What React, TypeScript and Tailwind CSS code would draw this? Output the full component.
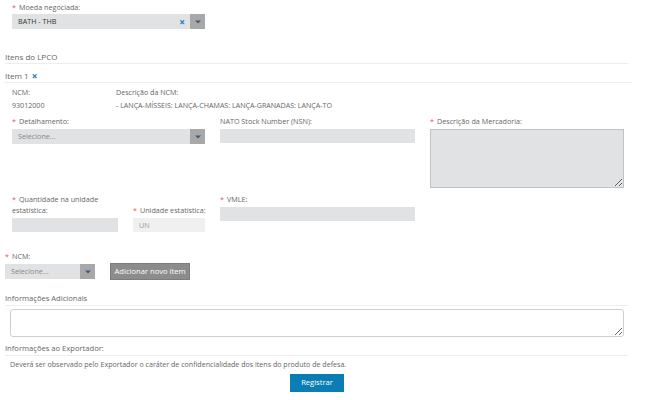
import React from "react";

const font = { fontFamily: '"Open Sans", "DejaVu Sans", sans-serif' };

function Req() {
  return <span className="text-[#e05a5a] mr-[3px]">*</span>;
}

function Label({ children, req }: { children: React.ReactNode; req?: boolean }) {
  return (
    <div className="text-[7.2px] leading-[11px] text-[#666] whitespace-nowrap">
      {req && <Req />}
      {children}
    </div>
  );
}

function Arrow() {
  return (
    <svg width="6" height="4" viewBox="0 0 6 4">
      <path d="M0 0.5 L6 0.5 L3 3.5 Z" fill="#3d5a7a" />
    </svg>
  );
}

function Select({ value, width, clear, placeholder }: { value: string; width: string; clear?: boolean; placeholder?: boolean }) {
  return (
    <div className={`flex h-[15px] ${width} bg-[#e1e2e3]`}>
      <div className={`flex-1 flex items-center pl-[6px] text-[7.2px] ${placeholder ? "text-[#888]" : "text-[#333]"}`}>{value}</div>
      {clear && (
        <div className="flex items-center pr-[5px] text-[#1a7bbd] text-[10px] font-bold leading-none">×</div>
      )}
      <div className="w-[15px] bg-[#a8a8a8] flex items-center justify-center">
        <Arrow />
      </div>
    </div>
  );
}

export default function App() {
  return (
    <div className="w-[650px] h-[400px] bg-white overflow-hidden text-[#555]" style={font}>
      <div className="pl-[12px] pt-[2px]">
        <Label req>Moeda negociada:</Label>
        <div className="mt-[1px]">
          <Select value="BATH - THB" width="w-[193px]" clear />
        </div>
      </div>

      <div className="pl-[5px] mt-[22px] w-[628px]">
        <div className="text-[8px] leading-[11px] text-[#666] pb-[1px] border-b border-[#ededed]">Itens do LPCO</div>
        <div className="mt-[6px] w-[627px] text-[8px] leading-[11px] text-[#666] pb-[1px] border-b border-[#ededed] flex items-center">
          Item 1
          <span className="ml-[3px] text-[#1a7bbd] font-bold text-[10px] leading-none">×</span>
        </div>
      </div>

      <div className="pl-[12px] mt-[4px]">
        <div className="flex text-[7.1px] leading-[11px] text-[#666]">
          <div className="w-[104px]">NCM:</div>
          <div>Descrição da NCM:</div>
        </div>
        <div className="flex text-[7.1px] leading-[11px] text-[#666] mt-[2px]">
          <div className="w-[104px]">93012000</div>
          <div>- LANÇA-MÍSSEIS: LANÇA-CHAMAS: LANÇA-GRANADAS: LANÇA-TO</div>
        </div>

        <div className="grid grid-cols-[193px_195px_194px] gap-x-[15px] mt-[5px]">
          <div>
            <Label req>Detalhamento:</Label>
            <div className="mt-[2px]">
              <Select value="Selecione..." width="w-[193px]" placeholder />
            </div>
          </div>
          <div>
            <Label>NATO Stock Number (NSN):</Label>
            <div className="mt-[2px] h-[14px] bg-[#e1e2e3]" />
          </div>
          <div>
            <Label req>Descrição da Mercadoria:</Label>
            <textarea
              readOnly
              className="mt-[2px] block w-[194px] h-[59px] bg-[#e1e2e3] border border-[#c2c2c2] outline-none"
            />
          </div>
        </div>

        <div className="grid grid-cols-[193px_195px] gap-x-[15px] mt-[6px]">
          <div className="flex items-end gap-x-[15px]">
            <div>
              <Label req>Quantidade na unidade<br />estatística:</Label>
              <div className="mt-[2px] w-[106px] h-[14px] bg-[#e1e2e3]" />
            </div>
            <div>
              <Label req>Unidade estatística:</Label>
              <div className="mt-[2px] w-[72px] h-[14px] bg-[#f0f0f0] flex items-center pl-[6px] text-[7.2px] text-[#999]">UN</div>
            </div>
          </div>
          <div>
            <Label req>VMLE:</Label>
            <div className="mt-[2px] h-[14px] bg-[#e1e2e3]" />
          </div>
        </div>
      </div>

      <div className="pl-[5px] mt-[19px]">
        <Label req>NCM:</Label>
        <div className="flex items-center gap-x-[15px] mt-[1px]">
          <Select value="Selecione..." width="w-[90px]" placeholder />
          <button className="w-[80px] h-[17px] bg-[#8c8c8c] border border-[#7c7c7c] text-white text-[7.6px] leading-none whitespace-nowrap">
            Adicionar novo item
          </button>
        </div>
      </div>

      <div className="pl-[5px] mt-[13px] w-[628px]">
        <div className="text-[7.6px] leading-[11px] text-[#666] pb-[1px] border-b border-[#ededed]">Informações Adicionais</div>
        <div className="pl-[5px] mt-[3px]">
          <textarea readOnly className="block w-[614px] h-[28px] bg-white border border-[#cfcfcf] rounded-[3px] outline-none" />
        </div>
        <div className="mt-[6px] text-[7.6px] leading-[11px] text-[#666] pb-[1px] border-b border-[#ededed]">Informações ao Exportador:</div>
        <div className="pl-[5px] mt-[3px] text-[7.1px] leading-[11px] text-[#666]">
          Deverá ser observado pelo Exportador o caráter de confidencialidade dos itens do produto de defesa.
        </div>
      </div>

      <div className="flex justify-center mt-[4px] pr-[16px]">
        <button className="w-[54px] h-[18px] bg-[#0a7db4] text-white text-[7.6px] leading-none">Registrar</button>
      </div>
    </div>
  );
}
